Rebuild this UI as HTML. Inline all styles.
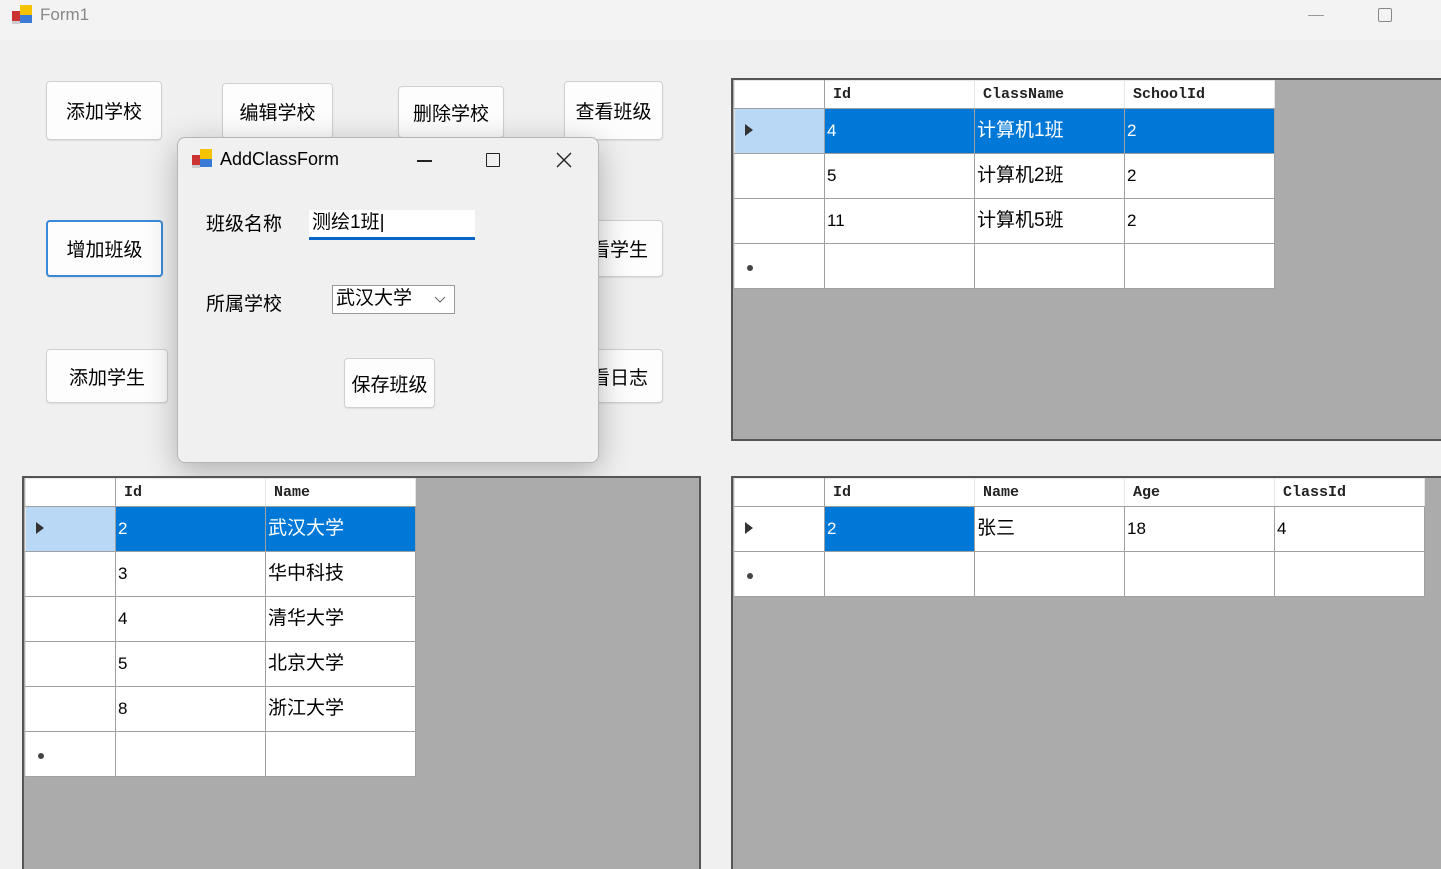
<!DOCTYPE html>
<html><head><meta charset="utf-8"><style>
*{box-sizing:border-box;margin:0;padding:0}
body{width:1441px;height:869px;background:#f0f0f0;position:relative;overflow:hidden;font-family:"Liberation Sans","Noto Sans CJK SC",sans-serif;color:#000}
.abs{position:absolute}
.btn{position:absolute;background:#fdfdfd;border:1px solid #d0d0d0;border-radius:4px;font-size:19px;display:flex;align-items:center;justify-content:center;box-shadow:0 1px 1px rgba(0,0,0,.08)}
.grid{position:absolute;background:#ababab;border:2px solid #555;border-right:none;border-bottom:none}
table{border-collapse:collapse;position:absolute;left:1px;top:0px;background:#fff}
td{border:1px solid #a0a0a0;height:45px;font-size:17px;padding:0 2px;vertical-align:middle;white-space:nowrap}
td.c{font-size:19px;line-height:20px}
tr.h td{height:28px;font-family:"Liberation Mono",monospace;font-size:15px;font-weight:bold;padding-left:8px;border-color:#e6e6e6;border-bottom-color:#a0a0a0;color:#222}
tr.h td:first-child{border-right-color:#a0a0a0}
td.rh{background:#fff;border-color:#e6e6e6 #a0a0a0 #a0a0a0 #e6e6e6}
tr.sel td{background:#0078d7;color:#fff}
tr.sel td.rh{background:#b8d8f5}
.arrow{display:inline-block;border-left:8px solid #333;border-top:6px solid transparent;border-bottom:6px solid transparent;margin-left:8px}
.star{display:inline-block;width:6px;height:6px;border-radius:50%;background:#444;margin-left:10px}
</style></head><body>
<div class="abs" style="left:0;top:0;width:1441px;height:40px;background:#f3f3f3"></div>
<svg class="abs" style="left:12px;top:5px" width="22" height="20"><rect x="0" y="6" width="8" height="10" fill="#c33"/><rect x="8" y="0" width="12" height="10" fill="#f5c400"/><rect x="8" y="10" width="12" height="8" fill="#3a7bd5"/><rect x="0" y="16" width="8" height="3" fill="#ccc"/></svg>
<div class="abs" style="left:40px;top:5px;font-size:17px;color:#888">Form1</div>
<div class="abs" style="left:1308px;top:15px;width:16px;height:1px;background:#999"></div>
<div class="abs" style="left:1378px;top:8px;width:14px;height:14px;border:1.5px solid #888;border-radius:2px"></div>

<div class="btn" style="left:46px;top:81px;width:116px;height:59px">添加学校</div>
<div class="btn" style="left:222px;top:83px;width:111px;height:56px">编辑学校</div>
<div class="btn" style="left:398px;top:86px;width:106px;height:52px">删除学校</div>
<div class="btn" style="left:564px;top:81px;width:99px;height:59px">查看班级</div>
<div class="btn" style="left:46px;top:220px;width:117px;height:57px;border:2px solid #3b8ad8">增加班级</div>
<div class="btn" style="left:560px;top:220px;width:103px;height:57px;justify-content:flex-end;padding-right:14px">看学生</div>
<div class="btn" style="left:46px;top:349px;width:122px;height:54px">添加学生</div>
<div class="btn" style="left:560px;top:349px;width:103px;height:54px;justify-content:flex-end;padding-right:14px">看日志</div>

<div class="abs" style="left:177px;top:137px;width:422px;height:326px;background:#f0f0f0;border:1px solid #b5b5b5;border-radius:8px;box-shadow:0 8px 32px rgba(0,0,0,.28)">
<svg class="abs" style="left:14px;top:10px" width="22" height="22"><rect x="0" y="7" width="8" height="10" fill="#c33"/><rect x="8" y="1" width="12" height="10" fill="#f5c400"/><rect x="8" y="11" width="12" height="8" fill="#3a7bd5"/><rect x="0" y="17" width="8" height="3" fill="#ccc"/></svg>
<div class="abs" style="left:42px;top:11px;font-size:18px">AddClassForm</div>
<div class="abs" style="left:239px;top:22px;width:15px;height:1.5px;background:#222"></div>
<div class="abs" style="left:308px;top:15px;width:14px;height:14px;border:1.5px solid #222;border-radius:1px"></div>
<svg class="abs" style="left:378px;top:14px" width="16" height="16"><path d="M1 1L15 15M15 1L1 15" stroke="#222" stroke-width="1.4"/></svg>
<div class="abs" style="left:28px;top:71px;font-size:19px">班级名称</div>
<div class="abs" style="left:131px;top:72px;width:166px;height:30px;background:#fff;border-bottom:3px solid #0a64c8;font-size:19px;padding-left:3px;line-height:26px">测绘1班|</div>
<div class="abs" style="left:28px;top:151px;font-size:19px">所属学校</div>
<div class="abs" style="left:154px;top:147px;width:123px;height:29px;background:#fff;border:1px solid #999;font-size:19px;padding-left:3px;line-height:26px">武汉大学
<svg class="abs" style="left:101px;top:10px" width="12" height="8"><path d="M1 1L6 6L11 1" stroke="#666" fill="none"/></svg></div>
<div class="btn" style="left:166px;top:220px;width:91px;height:50px">保存班级</div>
</div>

<div class="grid" style="left:731px;top:78px;width:710px;height:363px;border-bottom:2px solid #555">
<table style="width:541px">
<tr class="h"><td style="width:90px"></td><td style="width:150px">Id</td><td style="width:150px">ClassName</td><td style="width:150px">SchoolId</td></tr>
<tr class="sel"><td class="rh"><span class="arrow"></span></td><td>4</td><td class="c">计算机1班</td><td>2</td></tr>
<tr><td class="rh"></td><td>5</td><td class="c">计算机2班</td><td>2</td></tr>
<tr><td class="rh"></td><td>11</td><td class="c">计算机5班</td><td>2</td></tr>
<tr><td class="rh"><span class="star"></span></td><td></td><td></td><td></td></tr>
</table></div>

<div class="grid" style="left:22px;top:476px;width:679px;height:393px;border-right:2px solid #555">
<table style="width:391px">
<tr class="h"><td style="width:90px"></td><td style="width:150px">Id</td><td style="width:150px">Name</td></tr>
<tr class="sel"><td class="rh"><span class="arrow"></span></td><td>2</td><td class="c">武汉大学</td></tr>
<tr><td class="rh"></td><td>3</td><td class="c">华中科技</td></tr>
<tr><td class="rh"></td><td>4</td><td class="c">清华大学</td></tr>
<tr><td class="rh"></td><td>5</td><td class="c">北京大学</td></tr>
<tr><td class="rh"></td><td>8</td><td class="c">浙江大学</td></tr>
<tr><td class="rh"><span class="star"></span></td><td></td><td></td></tr>
</table></div>

<div class="grid" style="left:731px;top:476px;width:710px;height:393px">
<table style="width:691px">
<tr class="h"><td style="width:90px"></td><td style="width:150px">Id</td><td style="width:150px">Name</td><td style="width:150px">Age</td><td style="width:150px">ClassId</td></tr>
<tr><td class="rh"><span class="arrow"></span></td><td style="background:#0078d7;color:#fff">2</td><td class="c">张三</td><td>18</td><td>4</td></tr>
<tr><td class="rh"><span class="star"></span></td><td></td><td></td><td></td><td></td></tr>
</table></div>
</body></html>
